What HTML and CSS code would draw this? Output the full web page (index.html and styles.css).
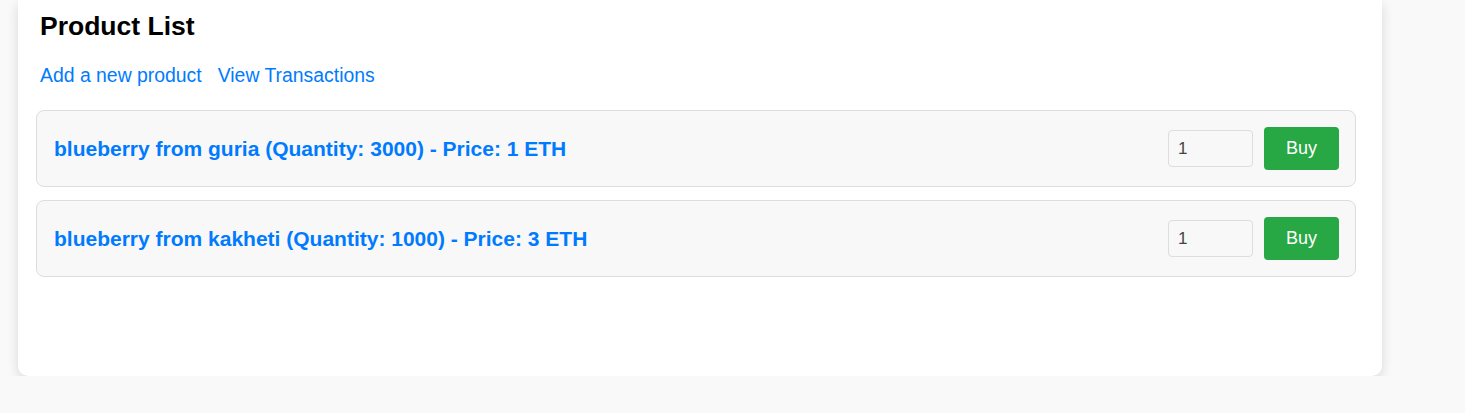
FILE: index.html
```html
<!DOCTYPE html>
<html>
<head>
<meta charset="utf-8">
<link rel="stylesheet" href="styles.css">
</head>
<body>
<div class="card">
  <h2 class="title">Product List</h2>
  <nav class="links">
    <a href="#" class="link">Add a new product</a>
    <a href="#" class="link">View Transactions</a>
  </nav>
  <ul class="products">
    <li class="product">
      <span class="product-name">blueberry from guria (Quantity: 3000) - Price: 1 ETH</span>
      <div class="actions">
        <input class="qty" type="number" value="1">
        <button class="buy">Buy</button>
      </div>
    </li>
    <li class="product">
      <span class="product-name">blueberry from kakheti (Quantity: 1000) - Price: 3 ETH</span>
      <div class="actions">
        <input class="qty" type="number" value="1">
        <button class="buy">Buy</button>
      </div>
    </li>
  </ul>
</div>
</body>
</html>
```
FILE: styles.css
```css
* { box-sizing: border-box; }
html, body {
  margin: 0;
  padding: 0;
  background: #f9f9f9;
  font-family: "Liberation Sans", Arial, sans-serif;
}
.card {
  margin-left: 18px;
  width: 1364px;
  height: 376px;
  background: #fff;
  border-radius: 0 0 10px 10px;
  box-shadow: 0 4px 12px rgba(0, 0, 0, 0.13);
  padding: 11px 26px 0 18px;
}
.title {
  margin: 0 0 0 4px;
  font-size: 26.5px;
  font-weight: bold;
  color: #000;
}
.links {
  margin: 22px 0 0 4px;
  display: flex;
  gap: 16px;
}
.link {
  color: #007bff;
  text-decoration: none;
  font-size: 19.4px;
}
.products {
  list-style: none;
  margin: 23px 0 0 0;
  padding: 0;
  display: flex;
  flex-direction: column;
  gap: 13px;
}
.product {
  display: flex;
  align-items: center;
  justify-content: space-between;
  background: #f8f8f8;
  border: 1px solid #ddd;
  border-radius: 8px;
  padding: 16px 16px 16px 17px;
}
.product-name {
  color: #007bff;
  font-weight: bold;
  font-size: 21px;
}
.actions {
  display: flex;
  align-items: center;
  gap: 11px;
}
.qty {
  width: 85px;
  height: 37px;
  border: 1px solid #ddd;
  border-radius: 4px;
  background: #f8f8f8;
  font-family: "Liberation Sans", Arial, sans-serif;
  font-size: 17px;
  color: #444;
  padding: 0 9px;
}
.buy {
  width: 75px;
  height: 43px;
  border: none;
  border-radius: 4px;
  background: #28a745;
  color: #fff;
  font-family: "Liberation Sans", Arial, sans-serif;
  font-size: 18px;
  cursor: pointer;
}
```
